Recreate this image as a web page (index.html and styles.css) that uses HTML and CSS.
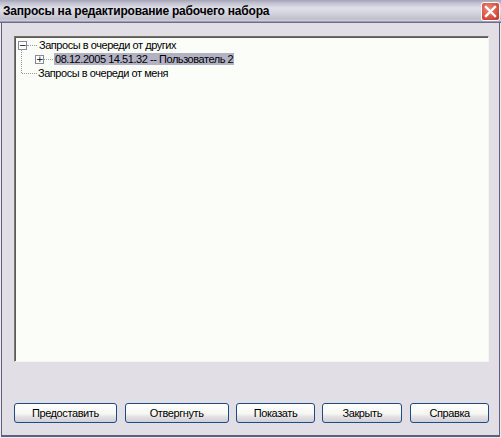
FILE: index.html
```html
<!DOCTYPE html>
<html>
<head>
<meta charset="utf-8">
<link rel="stylesheet" href="styles.css">
</head>
<body>
<div class="window">
  <div class="titlebar">
    <span class="title">Запросы на редактирование рабочего набора</span>
    <span class="close"><svg width="13" height="13" viewBox="0 0 13 13"><path d="M2 2 L11 11 M11 2 L2 11" stroke="#fff" stroke-width="2.4" stroke-linecap="square"/></svg></span>
  </div>
  <div class="content">
    <div class="tree">
      <div class="row">
        <span class="box">−</span><span class="dash d1"></span><span class="label">Запросы в очереди от других</span>
      </div>
      <div class="row child">
        <span class="box">+</span><span class="dash d2"></span><span class="label sel">08.12.2005 14.51.32 -- Пользователь 2</span>
      </div>
      <div class="row last">
        <span class="elbow"></span><span class="label">Запросы в очереди от меня</span>
      </div>
    </div>
    <div class="buttons">
      <button class="btn b1">Предоставить</button>
      <button class="btn b2">Отвергнуть</button>
      <button class="btn b3">Показать</button>
      <button class="btn b4">Закрыть</button>
      <button class="btn b5">Справка</button>
    </div>
  </div>
</div>
</body>
</html>
```

FILE: styles.css
```css
html, body {
  margin: 0;
  padding: 0;
  background: #e2dee6;
}
.window {
  width: 501px;
  height: 438px;
  box-sizing: border-box;
  display: flex;
  flex-direction: column;
  background: #e2dee6;
  border-left: 2px solid #ecebf0;
  border-right: 2px solid #ecebf0;
  border-bottom: 1px solid #ecebf0;
  font-family: "Liberation Sans", Arial, sans-serif;
  font-size: 11px;
  color: #000;
}
.titlebar {
  height: 22px;
  flex: none;
  display: flex;
  align-items: center;
  justify-content: space-between;
  padding: 0 1px 0 1px;
  margin: 0 -2px;
  background: linear-gradient(#a4a4b8 0, #c0c0ce 3px, #e0e0ea 8px, #d4d4de 13px, #c0c0cc 19px, #d0d0da 21px, #6a6a88 22px);
  border-bottom: 1px solid #6c6c8c;
}
.title {
  font-weight: bold;
  font-size: 12px;
  padding-left: 2px;
  letter-spacing: -0.2px;
}
.close {
  width: 19px;
  height: 19px;
  box-sizing: border-box;
  border-radius: 3px;
  border: 1px solid #fff;
  background: radial-gradient(circle at 40% 35%, #ec8a76, #d4483a 70%, #b83428);
  display: flex;
  align-items: center;
  justify-content: center;
  margin-top: 1px;
}
.content {
  flex: 1;
  display: flex;
  flex-direction: column;
  padding: 13px 10px 0 12px;
  border-left: 1px solid #5e5e7e;
  border-right: 1px solid #5e5e7e;
  border-bottom: 2px solid #5e5e7e;
  margin: 0 -1px;
}
.tree {
  height: 326px;
  box-sizing: border-box;
  background: #fbfdf8;
  border-top: 1px solid #716f64;
  border-left: 1px solid #7c7a72;
  border-right: 1px solid #f4f4f4;
  border-bottom: 1px solid #f4f4f4;
  box-shadow: inset 1px 1px 0 #5a5a5a;
  padding: 1px 0 0 3px;
}
.row {
  height: 14px;
  display: flex;
  align-items: center;
  position: relative;
}
.box {
  width: 9px;
  height: 9px;
  box-sizing: border-box;
  border: 1px solid #8a8a9a;
  background: #fff;
  font-size: 9px;
  line-height: 6px;
  text-align: center;
  flex: none;
  font-family: "DejaVu Sans", sans-serif;
}
.dash {
  height: 0;
  border-top: 1px dotted #9a9a9a;
  flex: none;
}
.d1 { width: 10px; margin-right: 1px; }
.d2 { width: 9px; margin-right: 1px; }
.child { padding-left: 17px; }
.label {
  white-space: nowrap;
  padding: 0 1px;
  line-height: 12px;
  letter-spacing: -0.45px;
}
.sel {
  background: #b2b2c4;
}
.elbow {
  width: 15px;
  margin-left: 4px;
  height: 0;
  border-top: 1px dotted #9a9a9a;
  position: relative;
}
.elbow::before {
  content: "";
  position: absolute;
  left: -1px;
  top: -25px;
  height: 24px;
  border-left: 1px dotted #9a9a9a;
}
.buttons {
  display: flex;
  margin-top: 41px;
  gap: 0;
}
.btn {
  height: 20px;
  box-sizing: border-box;
  border: 1px solid #1c4c84;
  border-radius: 3px;
  background: linear-gradient(#ffffff 0, #f6f6f2 55%, #e4e2e4 70%, #d0ced8 100%);
  font-family: "Liberation Sans", Arial, sans-serif;
  font-size: 11px;
  letter-spacing: -0.4px;
  color: #000;
  padding: 0;
  margin: 0;
}
.b1 { width: 103px; }
.b2 { width: 104px; margin-left: 8px; }
.b3 { width: 80px; margin-left: 7px; }
.b4 { width: 80px; margin-left: 7px; }
.b5 { width: 79px; margin-left: 8px; }
```
